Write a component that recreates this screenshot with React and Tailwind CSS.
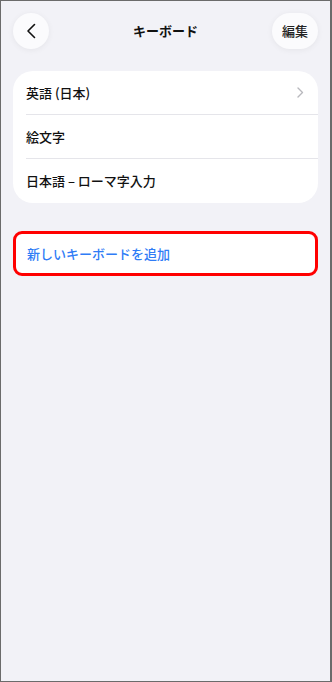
const rows = ['英語 (日本)', '絵文字', '日本語 – ローマ字入力'];

const App = () => {
  return (
    <div
      className="w-[332px] h-[682px] bg-[#f2f2f7] border-l border-t border-b border-r-2 border-[#6b6b6b] overflow-hidden"
      style={{ fontFamily: '"Noto Sans CJK JP", "Noto Sans", sans-serif' }}
    >
      {/* header */}
      <div className="flex items-center justify-between pl-[12px] pr-[12px] pt-[11px] h-[48px]">
        <button className="w-[36px] h-[36px] rounded-full bg-[#fbfbfd] shadow-[0_1px_6px_rgba(0,0,0,0.06)] flex items-center justify-center">
          <svg width="10" height="16" viewBox="0 0 10 16" fill="none">
            <path d="M8.5 1.5L2 8l6.5 6.5" stroke="#111" strokeWidth="1.6" strokeLinecap="round" strokeLinejoin="round" />
          </svg>
        </button>
        <div className="text-[13px] font-bold text-[#111] pl-[10px]">キーボード</div>
        <button className="w-[46px] h-[36px] rounded-full bg-[#fbfbfd] shadow-[0_1px_6px_rgba(0,0,0,0.06)] text-[13px] font-medium text-[#222] flex items-center justify-center">
          編集
        </button>
      </div>

      {/* keyboard list */}
      <div className="mt-[22px] mx-[12px] bg-white rounded-[20px] overflow-hidden">
        {rows.map((label, i) => (
          <div key={label} className="pl-[13px]">
            <div
              className={`h-[44px] flex items-center justify-between pr-[14px] ${
                i < rows.length - 1 ? 'border-b border-[#e5e5ea]' : ''
              }`}
            >
              <span className="text-[13px] font-medium text-[#111]">{label}</span>
              {i === 0 && (
                <svg width="7" height="11" viewBox="0 0 7 11" fill="none">
                  <path d="M1 1l4.5 4.5L1 10" stroke="#b8b8bd" strokeWidth="1.4" strokeLinecap="round" strokeLinejoin="round" />
                </svg>
              )}
            </div>
          </div>
        ))}
      </div>

      {/* add keyboard */}
      <div className="mt-[28px] mx-[12px] h-[45px] bg-white rounded-[9px] border-[3px] border-[#ff0000] flex items-center pl-[11px]">
        <span className="text-[13px] font-medium text-[#2f7cf6]">新しいキーボードを追加</span>
      </div>
    </div>
  );
};

export default App;
